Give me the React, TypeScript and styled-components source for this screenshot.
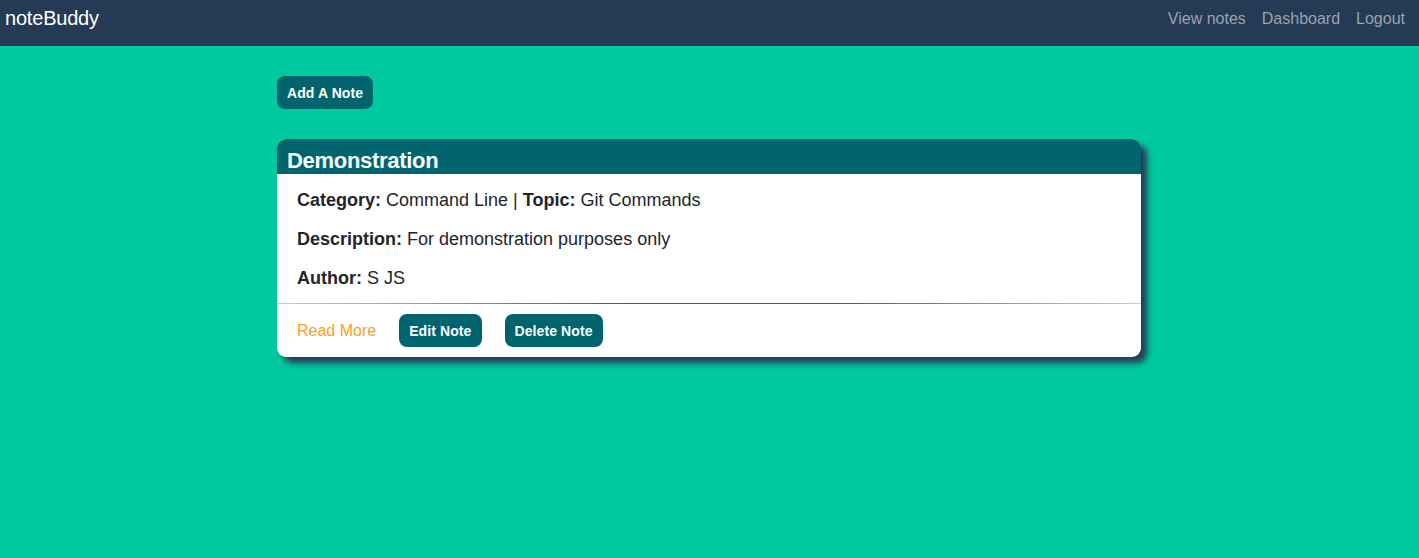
import React from "react";
import styled, { createGlobalStyle } from "styled-components";

const GlobalStyle = createGlobalStyle`
  html, body { margin: 0; padding: 0; }
  body {
    background: #00c99f;
    font-family: "Liberation Sans", Arial, Helvetica, sans-serif;
    min-height: 558px;
  }
`;

const NavBar = styled.nav`
  height: 46px;
  background: #253a54;
  display: flex;
  align-items: center;
  justify-content: space-between;
  padding: 0 14px 0 5px;
  box-sizing: border-box;
`;

const Brand = styled.a`
  color: #ffffff;
  font-size: 20px;
  letter-spacing: -0.2px;
  text-decoration: none;
  margin-top: -9px;
`;

const NavLinks = styled.div`
  display: flex;
  gap: 16px;
  margin-top: -8px;
`;

const NavLink = styled.a`
  color: #9ba3ad;
  font-size: 16px;
  text-decoration: none;
`;

const Main = styled.main`
  width: 864px;
  margin: 0 0 0 277px;
  padding-top: 30px;
  display: flex;
  flex-direction: column;
  align-items: flex-start;
`;

const Button = styled.button`
  background: #00646e;
  color: #ffffff;
  border: none;
  border-radius: 8px;
  font-family: "Liberation Sans", Arial, sans-serif;
  font-weight: bold;
  font-size: 14px;
  letter-spacing: 0.1px;
  height: 33px;
  padding: 0 10px;
  cursor: pointer;
`;

const Card = styled.section`
  margin-top: 30px;
  width: 864px;
  background: #ffffff;
  border-radius: 9px;
  overflow: hidden;
  box-shadow: 6px 6px 6px #263a55;
`;

const CardHeader = styled.header`
  background: #00646e;
  height: 35px;
  padding: 0 10px;
  box-sizing: border-box;
  display: flex;
  align-items: flex-end;
`;

const CardTitle = styled.h2`
  margin: 0;
  color: #ffffff;
  font-size: 22px;
  font-weight: bold;
  letter-spacing: -0.3px;
  line-height: 26px;
`;

const CardBody = styled.div`
  padding: 15px 20px 14px;
  display: flex;
  flex-direction: column;
  gap: 17px;
`;

const Field = styled.p`
  margin: 0;
  color: #212529;
  font-size: 18px;
  line-height: 22px;
`;

const Label = styled.strong`
  font-weight: bold;
`;

const Divider = styled.hr`
  margin: 0;
  border: none;
  height: 1px;
  background: linear-gradient(to right, #c8cccf, #1b6f7a 40%, #1b6f7a 65%, #c8cccf);
`;

const CardFooter = styled.footer`
  display: flex;
  align-items: center;
  padding: 10px 20px 10px;
  gap: 23px;
`;

const ReadMore = styled.a`
  color: #f7a125;
  font-size: 16px;
  text-decoration: none;
`;

export default function App() {
  return (
    <>
      <GlobalStyle />
      <NavBar>
        <Brand href="#">noteBuddy</Brand>
        <NavLinks>
          <NavLink href="#">View notes</NavLink>
          <NavLink href="#">Dashboard</NavLink>
          <NavLink href="#">Logout</NavLink>
        </NavLinks>
      </NavBar>
      <Main>
        <Button>Add A Note</Button>
        <Card>
          <CardHeader>
            <CardTitle>Demonstration</CardTitle>
          </CardHeader>
          <CardBody>
            <Field>
              <Label>Category:</Label> Command Line | <Label>Topic:</Label> Git Commands
            </Field>
            <Field>
              <Label>Description:</Label> For demonstration purposes only
            </Field>
            <Field>
              <Label>Author:</Label> S JS
            </Field>
          </CardBody>
          <Divider />
          <CardFooter>
            <ReadMore href="#">Read More</ReadMore>
            <Button>Edit Note</Button>
            <Button>Delete Note</Button>
          </CardFooter>
        </Card>
      </Main>
    </>
  );
}
